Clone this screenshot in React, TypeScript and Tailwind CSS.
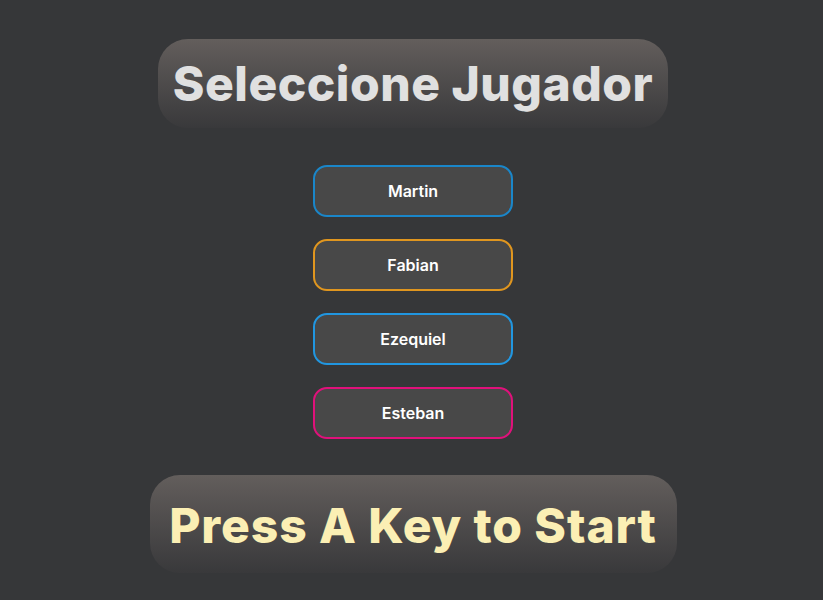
import { FC } from 'react';

const players = [
  { name: 'Martin', border: 'border-[#1a86c9]' },
  { name: 'Fabian', border: 'border-[#e0961f]' },
  { name: 'Ezequiel', border: 'border-[#2196e0]' },
  { name: 'Esteban', border: 'border-[#e0117b]' },
];

const App: FC = () => {
  return (
    <div
      className="min-h-screen w-full bg-[#363739] flex flex-col items-center pt-[39px] pl-[3px]"
      style={{ fontFamily: 'Inter, "Noto Sans", sans-serif' }}
    >
      <div className="h-[89px] w-[510px] rounded-[30px] bg-linear-to-b from-[#635e5c] to-[#39393b] flex items-center justify-center">
        <h1 className="text-[48px] font-extrabold text-[#e0e0e0] tracking-[0.5px]">Seleccione Jugador</h1>
      </div>

      <div className="mt-[37px] flex flex-col gap-[22px]">
        {players.map(player => (
          <button
            key={player.name}
            className={`w-[200px] h-[52px] rounded-[14px] border-2 ${player.border} bg-[#484848] text-white text-[16px] font-semibold flex items-center justify-center`}
          >
            {player.name}
          </button>
        ))}
      </div>

      <div className="mt-[36px] h-[98px] w-[527px] rounded-[30px] bg-linear-to-b from-[#635e5c] to-[#39393b] flex items-center justify-center">
        <h2 className="text-[48px] font-extrabold text-[#fbefb4] tracking-[0.9px] pt-[3px]">Press A Key to Start</h2>
      </div>
    </div>
  );
};

export default App;
